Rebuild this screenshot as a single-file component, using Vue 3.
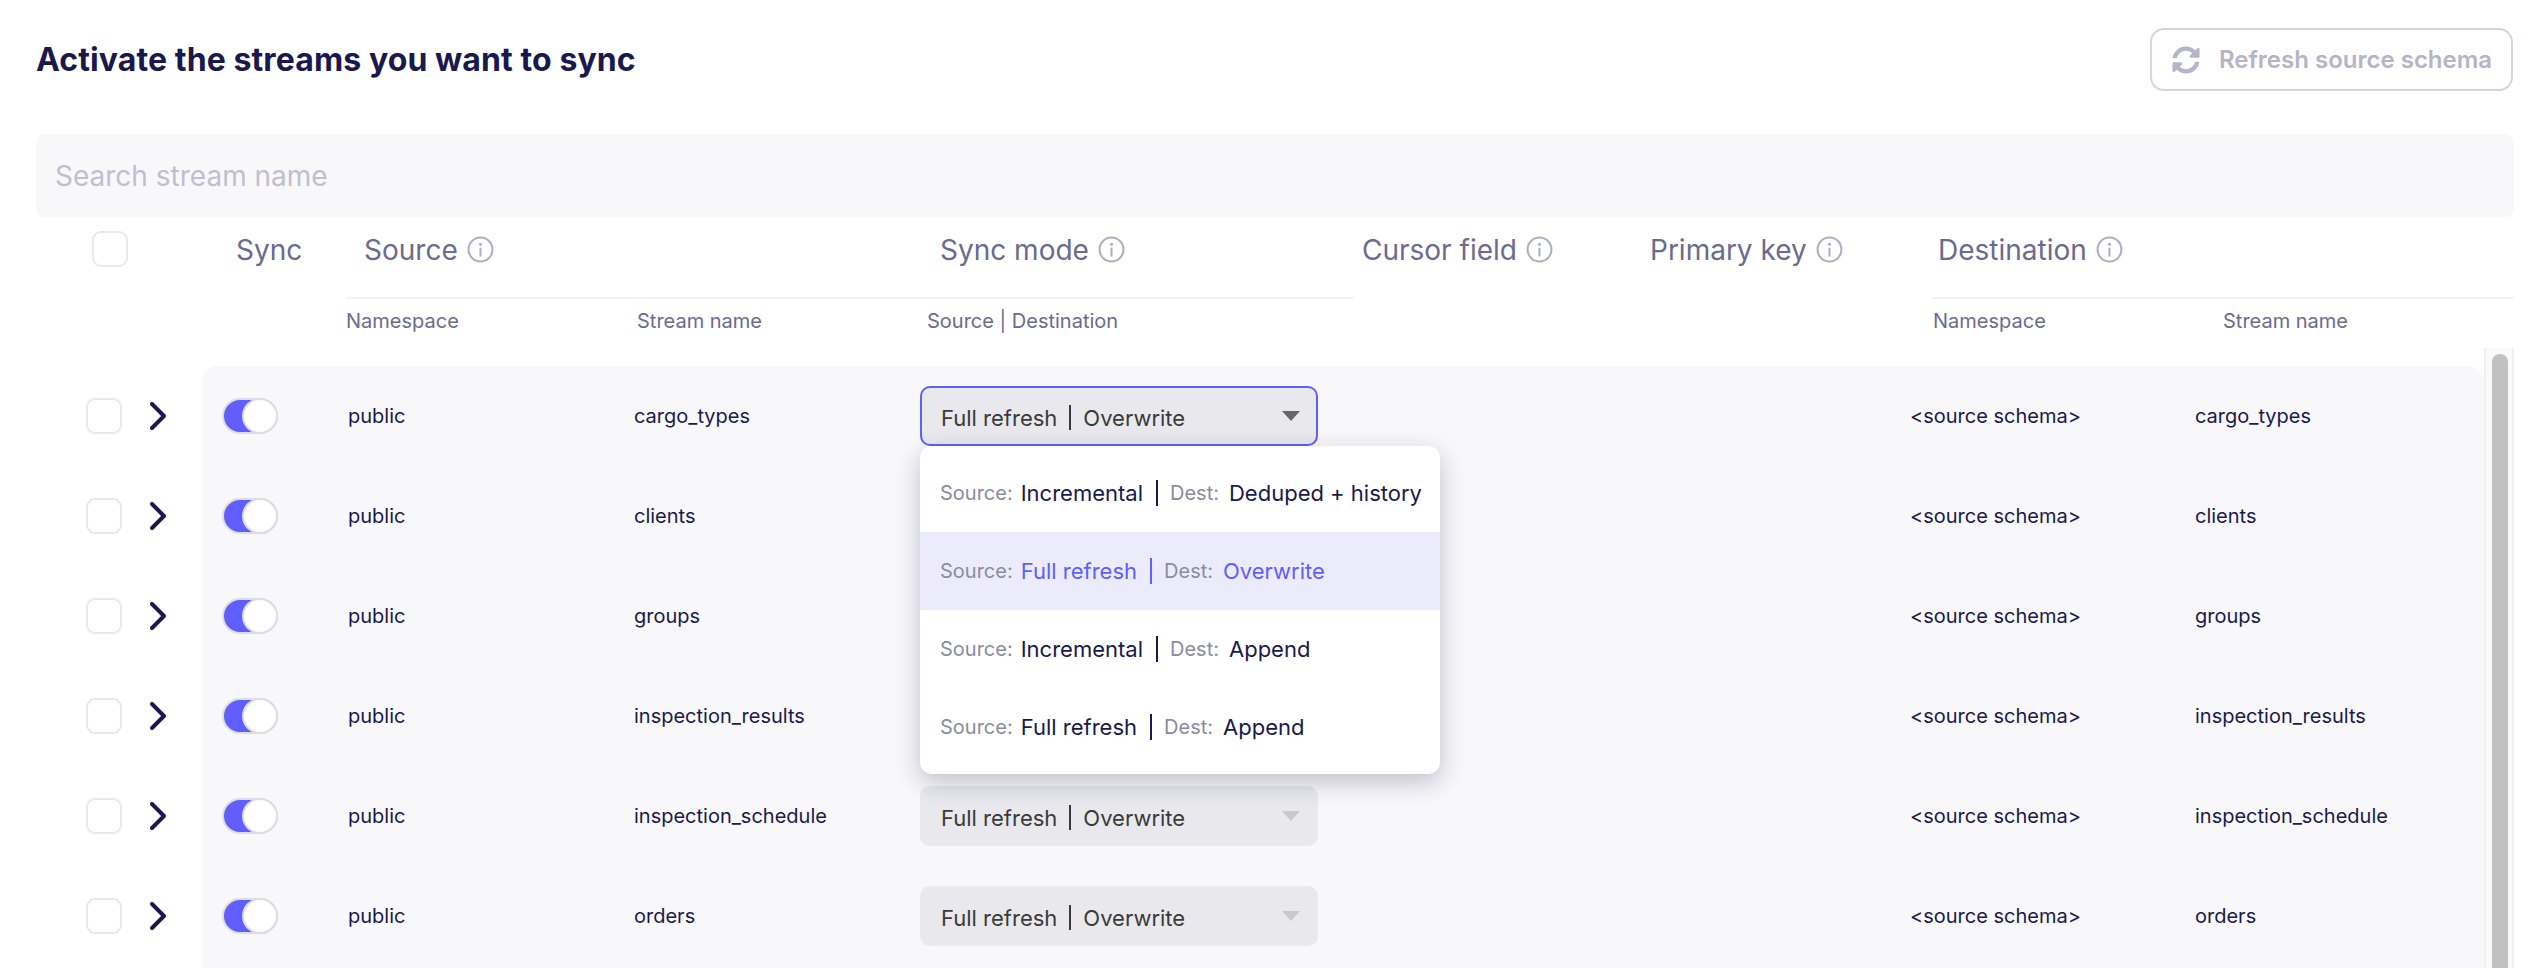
<template>
  <div class="page">
    <div class="top">
      <h1>Activate the streams you want to sync</h1>
      <button class="refresh">
        <svg class="refresh-ico" viewBox="0 0 512 512"><path fill="currentColor" d="M370.72 133.28C339.458 104.008 298.888 87.962 255.848 88c-77.458.068-144.328 53.178-162.791 126.85-1.344 5.363-6.122 9.15-11.651 9.15H24.103c-7.498 0-13.194-6.807-11.807-14.176C33.933 94.924 134.813 8 256 8c66.448 0 126.791 26.136 171.315 68.685L463.03 40.97C478.149 25.851 504 36.559 504 57.941V192c0 13.255-10.745 24-24 24H345.941c-21.382 0-32.09-25.851-16.971-40.971l41.75-41.749zM32 296h134.059c21.382 0 32.09 25.851 16.971 40.971l-41.75 41.75c31.262 29.273 71.835 45.319 114.876 45.28 77.418-.07 144.315-53.144 162.787-126.849 1.344-5.363 6.122-9.15 11.651-9.15h57.304c7.498 0 13.194 6.807 11.807 14.176C478.067 417.076 377.187 504 256 504c-66.448 0-126.791-26.136-171.315-68.685L48.97 471.03C33.851 486.149 8 475.441 8 454.059V320c0-13.255 10.745-24 24-24z"/></svg>
        Refresh source schema
      </button>
    </div>

    <div class="search">Search stream name</div>

    <div class="head">
      <span class="check"></span>
      <span class="head-cell">Sync</span>
      <span v-for="h in heads" :key="h" class="head-cell">
        {{ h }}
        <svg class="info" viewBox="0 0 26 26"><circle cx="13" cy="13" r="11.5" fill="none" stroke="currentColor" stroke-width="2"/><circle cx="13" cy="8" r="1.5" fill="currentColor"/><rect x="12" y="11" width="2" height="9" rx="1" fill="currentColor"/></svg>
      </span>
    </div>

    <div class="subhead">
      <div class="sub-left">
        <span>Namespace</span>
        <span>Stream name</span>
        <span>Source | Destination</span>
      </div>
      <div class="sub-right">
        <span>Namespace</span>
        <span>Stream name</span>
      </div>
    </div>

    <div class="scroller">
      <div class="rows">
        <div v-for="(name, i) in streams" :key="name" class="row">
          <div class="gutter">
            <span class="check"></span>
            <svg class="chevron" viewBox="0 0 16 28"><polyline points="2,2 14,14 2,26" fill="none" stroke="currentColor" stroke-width="4" stroke-linecap="round" stroke-linejoin="round"/></svg>
          </div>
          <div class="row-body">
            <div><span class="toggle"><span class="knob"></span></span></div>
            <div>public</div>
            <div>{{ name }}</div>
            <div class="mode-cell">
              <div class="select" :class="{ open: i === 0 }">
                <span>Full refresh</span><span class="sep"></span><span>Overwrite</span>
                <span class="caret"></span>
              </div>
              <div v-if="i === 0" class="menu">
                <div v-for="o in options" :key="o.source + o.dest" class="option" :class="{ active: o.active }">
                  <span class="lbl">Source:</span>
                  <span class="val">{{ o.source }}</span>
                  <span class="bar"></span>
                  <span class="lbl">Dest:</span>
                  <span class="val">{{ o.dest }}</span>
                </div>
              </div>
            </div>
            <div>&lt;source schema&gt;</div>
            <div>{{ name }}</div>
          </div>
        </div>
      </div>
      <div class="track"><div class="thumb"></div></div>
    </div>
  </div>
</template>

<script setup>
const heads = ['Source', 'Sync mode', 'Cursor field', 'Primary key', 'Destination']
const streams = ['cargo_types', 'clients', 'groups', 'inspection_results', 'inspection_schedule', 'orders']
const options = [
  { source: 'Incremental', dest: 'Deduped + history' },
  { source: 'Full refresh', dest: 'Overwrite', active: true },
  { source: 'Incremental', dest: 'Append' },
  { source: 'Full refresh', dest: 'Append' }
]
</script>

<style>
html, body {
  margin: 0;
  height: 968px;
  overflow: hidden;
  background: #fff;
}
</style>

<style scoped>
.page {
  box-sizing: border-box;
  width: 2536px;
  height: 968px;
  padding: 0 22px 0 36px;
  display: flex;
  flex-direction: column;
  font-family: Inter, "Liberation Sans", sans-serif;
  color: #1a194d;
}
.top {
  height: 134px;
  display: flex;
  justify-content: space-between;
  align-items: flex-start;
}
h1 {
  margin: 40px 0 0;
  font-size: 32px;
  line-height: 40px;
  font-weight: 700;
  letter-spacing: 0.1px;
}
.refresh {
  margin: 28px 1px 0 0;
  box-sizing: border-box;
  width: 363px;
  height: 63px;
  padding: 0 0 0 20px;
  display: flex;
  align-items: center;
  gap: 19px;
  background: #fff;
  border: 2px solid #d5d5e0;
  border-radius: 14px;
  color: #b5b4c8;
  font: 600 24px Inter, sans-serif;
}
.refresh-ico {
  width: 28px;
  height: 28px;
}
.search {
  box-sizing: border-box;
  height: 83px;
  padding-left: 19px;
  display: flex;
  align-items: center;
  background: #f8f8fa;
  border-radius: 8px;
  color: #c0bfd0;
  font-size: 28px;
}
.head {
  height: 80px;
  padding-left: 56px;
  display: grid;
  grid-template-columns: 144px 128px 576px 422px 288px 288px 1fr;
  align-items: start;
  padding-top: 14px;
  box-sizing: border-box;
}
.head-cell {
  display: flex;
  align-items: center;
  gap: 9px;
  height: 38px;
  font-size: 28px;
  color: #6b6b8f;
}
.info {
  width: 27px;
  height: 27px;
  margin-top: -2px;
  color: #afafc1;
}
.check {
  display: block;
  box-sizing: border-box;
  width: 36px;
  height: 36px;
  background: #fff;
  border: 2px solid #e8e8ed;
  border-radius: 9px;
}
.subhead {
  height: 51px;
  display: flex;
  padding-left: 310px;
  font-size: 20px;
  color: #6b6b8f;
}
.sub-left,
.sub-right {
  display: grid;
  align-items: start;
  padding-top: 10px;
  border-top: 2px solid #f3f3f6;
}
.sub-left {
  width: 1008px;
  grid-template-columns: 291px 290px 1fr;
}
.sub-right {
  margin-left: 579px;
  flex: 1;
  grid-template-columns: 290px 1fr;
}
.scroller {
  flex: 1;
  min-height: 0;
  display: flex;
}
.rows {
  flex: 1;
  padding-top: 18px;
  display: flex;
  flex-direction: column;
}
.row {
  height: 100px;
  display: flex;
  font-size: 20px;
}
.row:last-child {
  flex: 1;
}
.gutter {
  width: 166px;
  padding-left: 50px;
  box-sizing: border-box;
  height: 100px;
  display: flex;
  align-items: center;
  gap: 28px;
}
.chevron {
  width: 16px;
  height: 28px;
  color: #1a194d;
}
.row-body {
  flex: 1;
  height: 100%;
  background: #f8f8fa;
  display: grid;
  grid-template-columns: 146px 286px 286px 990px 285px 1fr;
  grid-template-rows: 100px;
  align-items: center;
}
.row:first-child .row-body {
  border-radius: 16px 16px 0 0;
}
.toggle {
  display: block;
  position: relative;
  box-sizing: border-box;
  width: 56px;
  height: 36px;
  margin-left: 20px;
  border: 2px solid #dcdce6;
  border-radius: 18px;
  background: #615eff;
}
.knob {
  position: absolute;
  top: -2px;
  right: -2px;
  box-sizing: border-box;
  width: 36px;
  height: 36px;
  background: #fff;
  border: 2px solid #dcdce6;
  border-radius: 50%;
}
.mode-cell {
  position: relative;
}
.select {
  box-sizing: border-box;
  position: relative;
  width: 398px;
  height: 60px;
  padding: 3px 0 0 19px;
  display: flex;
  align-items: center;
  background: #e8e8ed;
  border: 2px solid transparent;
  border-radius: 10px;
  font-size: 22px;
  color: #3a3a3a;
}
.select.open {
  border-color: #615eff;
}
.sep {
  width: 2px;
  height: 25px;
  margin: 0 12px;
  background: #3a3a3a;
}
.caret {
  position: absolute;
  right: 16px;
  top: 23px;
  width: 0;
  height: 0;
  border-left: 9px solid transparent;
  border-right: 9px solid transparent;
  border-top: 10px solid #c9c9c9;
}
.select.open .caret {
  border-top-color: #666;
}
.menu {
  position: absolute;
  top: 60px;
  left: 0;
  z-index: 5;
  box-sizing: border-box;
  width: 520px;
  padding: 8px 0;
  background: #fff;
  border-radius: 12px;
  box-shadow: 0 8px 24px rgba(26, 25, 77, 0.25);
}
.option {
  height: 78px;
  padding-left: 20px;
  display: flex;
  align-items: center;
  font-size: 22px;
  color: #1a194d;
}
.option.active {
  background: #ecebfc;
}
.option.active .val {
  color: #615eff;
}
.option.active .bar {
  background: #615eff;
}
.lbl {
  font-size: 20px;
  color: #8b8ba0;
  margin-right: 8px;
}
.bar {
  width: 2px;
  height: 26px;
  margin: 0 12px 0 13px;
}
.bar {
  background: #1a194d;
}
.bar + .lbl {
  margin-right: 10px;
}
.track {
  width: 30px;
  box-sizing: border-box;
  background: #fafafa;
  border-left: 2px solid #f0f0f0;
  border-right: 2px solid #f0f0f0;
  padding: 6px 4px 0 6px;
}
.thumb {
  height: 100%;
  background: #c1c1c1;
  border-radius: 8px 8px 0 0;
}
</style>
